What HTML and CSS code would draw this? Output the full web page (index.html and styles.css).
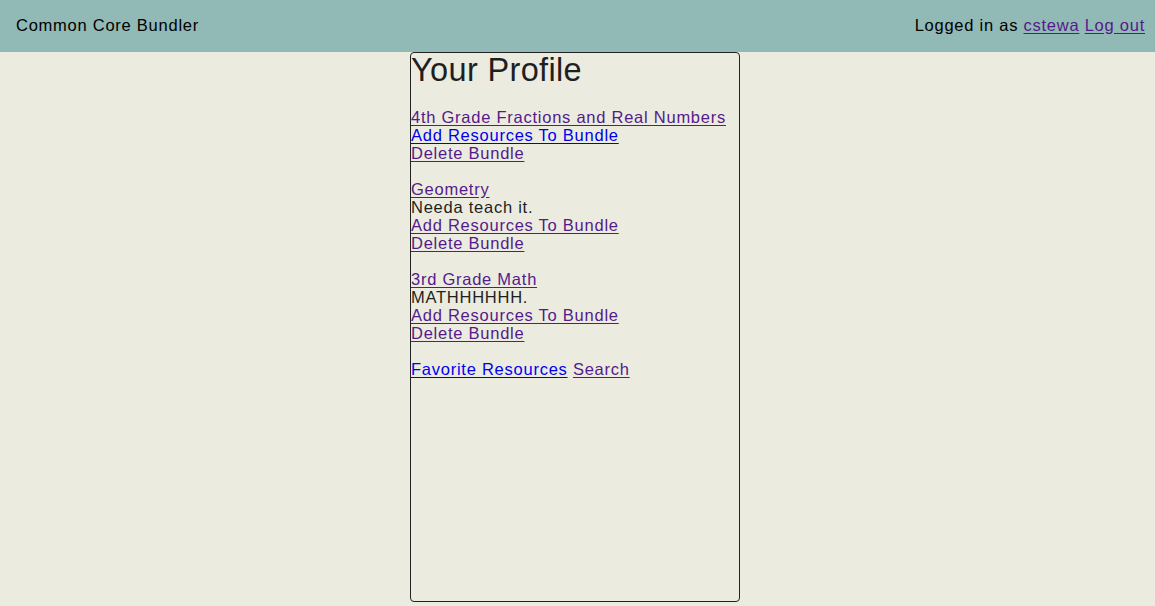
FILE: index.html
```html
<!DOCTYPE html>
<html>
<head>
<meta charset="utf-8">
<link rel="stylesheet" href="styles.css">
</head>
<body>
<header class="topbar">
  <div class="brand">Common Core Bundler</div>
  <div class="session">Logged in as <a class="visited" href="#">cstewa</a> <a class="visited" href="#">Log out</a></div>
</header>
<main class="profile">
  <h1 class="title">Your Profile</h1>
  <section class="bundle">
    <a class="visited" href="#">4th Grade Fractions and Real Numbers</a>
    <a class="fresh" href="#">Add Resources To Bundle</a>
    <a class="visited" href="#">Delete Bundle</a>
  </section>
  <section class="bundle">
    <a class="visited" href="#">Geometry</a>
    <span>Needa teach it.</span>
    <a class="visited" href="#">Add Resources To Bundle</a>
    <a class="visited" href="#">Delete Bundle</a>
  </section>
  <section class="bundle">
    <a class="visited" href="#">3rd Grade Math</a>
    <span>MATHHHHHH.</span>
    <a class="visited" href="#">Add Resources To Bundle</a>
    <a class="visited" href="#">Delete Bundle</a>
  </section>
  <nav class="footer-links"><a class="fresh" href="#">Favorite Resources</a> <a class="visited" href="#">Search</a></nav>
</main>
</body>
</html>
```

FILE: styles.css
```css
html, body {
  margin: 0;
  padding: 0;
}
body {
  background: #ebecdf;
  font-family: "Liberation Sans", Arial, Helvetica, sans-serif;
  font-size: 16.5px;
  line-height: 18px;
  letter-spacing: 0.75px;
  color: #1f1f1f;
  overflow: hidden;
}
.topbar {
  height: 52px;
  background: #91b9b5;
  display: flex;
  align-items: center;
  justify-content: space-between;
  padding: 0 10px 0 16px;
  color: #000;
}
.topbar .brand, .topbar .session {
  padding-bottom: 3px;
}
a.visited { color: #551a8b; text-decoration: underline; text-underline-offset: 2px; }
a.fresh { color: #0000ee; text-decoration: underline; text-underline-offset: 2px; }
.profile {
  width: 328px;
  height: 548px;
  margin-left: calc(50% - 167.5px);
  border: 1px solid #222;
  border-radius: 4px;
  display: flex;
  flex-direction: column;
  align-items: flex-start;
}
.title {
  font-size: 32.5px;
  font-weight: normal;
  line-height: 34px;
  letter-spacing: 0.35px;
  margin: 0 0 21px 0;
  color: #1f1f1f;
}
.bundle {
  display: flex;
  flex-direction: column;
  align-items: flex-start;
  margin-bottom: 18px;
}
```
